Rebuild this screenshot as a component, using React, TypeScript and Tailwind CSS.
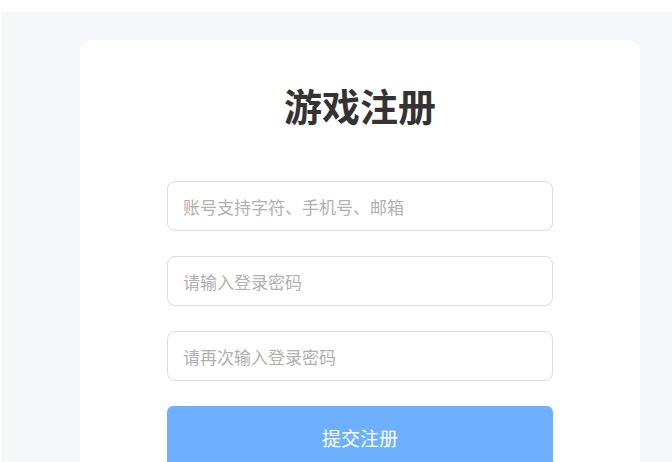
import React from "react";

const font = { fontFamily: '"Noto Sans CJK SC", "Noto Sans", sans-serif' };

export default function App() {
  const fields = ["账号支持字符、手机号、邮箱", "请输入登录密码", "请再次输入登录密码"];

  return (
    <div className="h-[462px] w-[672px] overflow-hidden bg-white pl-[2px] pt-[12px]" style={font}>
      <div className="h-full w-full bg-[#f6f7f9] pl-[78px] pt-[28px]">
        <div className="flex h-[500px] w-[560px] flex-col items-center rounded-[12px] bg-white pt-[38px]">
          <h1 className="text-[38px] font-bold leading-[54px] text-[#333333]">游戏注册</h1>

          <div className="mt-[49px] flex w-[386px] flex-col gap-[25px]">
            {fields.map((f) => (
              <input
                key={f}
                placeholder={f}
                className="h-[50px] w-full rounded-[8px] border border-[#dcdcdc] bg-white px-[15px] text-[17px] text-[#333] outline-none placeholder:text-[#b0b0b0]"
              />
            ))}
            <button className="h-[64px] w-full rounded-[6px] bg-[#6cb0ff] text-[19px] text-white">
              提交注册
            </button>
          </div>
        </div>
      </div>
    </div>
  );
}
